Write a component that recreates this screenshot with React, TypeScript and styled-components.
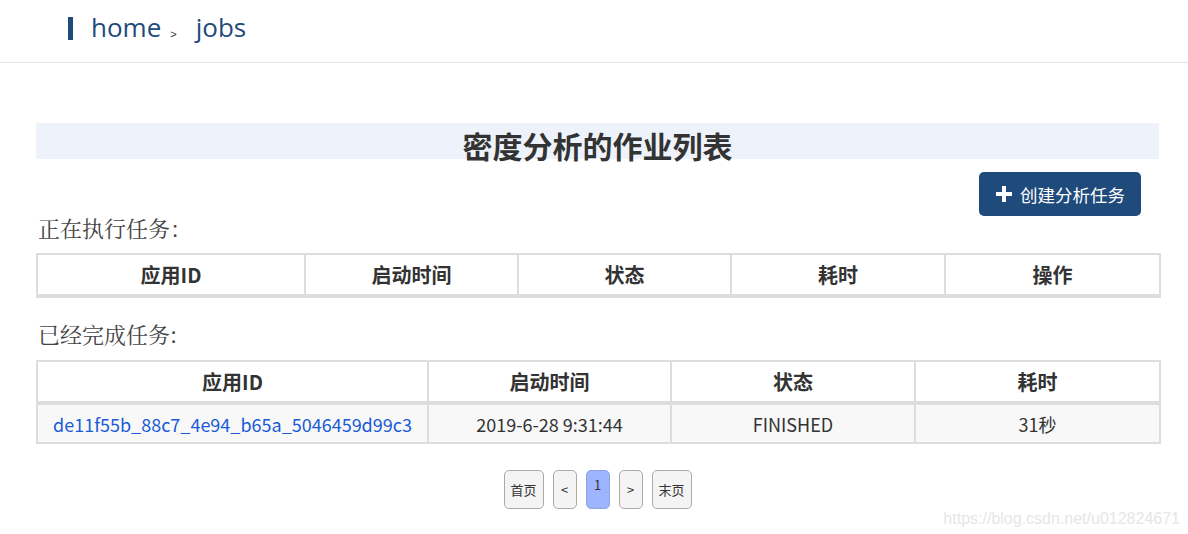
import styled, { createGlobalStyle } from "styled-components";

const GlobalStyle = createGlobalStyle`
    html, body {
        margin: 0;
        padding: 0;
        background: #fff;
    }
    body {
        font-family: "Noto Sans CJK SC", "Noto Sans", sans-serif;
        color: #333;
    }
    * {
        box-sizing: border-box;
    }
`;

const Page = styled.div`
    position: relative;
    width: 1188px;
    height: 534px;
    overflow: hidden;
`;

const Header = styled.header`
    height: 63px;
    border-bottom: 1px solid #e5e5e5;
    display: flex;
    align-items: center;
    padding-left: 68px;
`;

const Bar = styled.span`
    display: block;
    width: 5px;
    height: 23px;
    background: #1f4a7c;
    margin-right: 18px;
    margin-top: -6px;
`;

const Crumb = styled.a`
    font-family: "Open Sans", "Noto Sans", sans-serif;
    font-size: 26px;
    color: #1f4a7c;
    text-decoration: none;
    margin-top: -8px;
`;

const Sep = styled.span`
    font-family: "Liberation Sans", sans-serif;
    font-size: 11px;
    color: #333;
    margin: 6px 19px 0 9px;
`;

const Main = styled.main`
    padding: 60px 29px 0 36px;
`;

const TitleBand = styled.div`
    height: 36px;
    background: #eef3fb;
    text-align: center;
`;

const Title = styled.h1`
    margin: 0;
    font-size: 30px;
    font-weight: 700;
    line-height: 44px;
    color: #333;
`;

const Toolbar = styled.div`
    display: flex;
    justify-content: flex-end;
    padding-right: 18px;
    margin-top: 13px;
`;

const CreateBtn = styled.button`
    display: flex;
    align-items: center;
    gap: 8px;
    height: 44px;
    padding: 0 16px 0 17px;
    background: #1f4a7c;
    border: none;
    border-radius: 5px;
    color: #fff;
    font-family: "Noto Sans CJK SC", sans-serif;
    font-size: 17.5px;
    cursor: pointer;
`;

const SectionLabel = styled.div<{ gap: number }>`
    margin-top: ${(p) => p.gap}px;
    padding-left: 2px;
    font-family: "Noto Serif CJK SC", "Liberation Serif", "Noto Sans CJK SC", serif;
    font-size: 22px;
    line-height: 24px;
    color: #444;
`;

const Table = styled.table<{ top: number }>`
    width: 100%;
    margin-top: ${(p) => p.top}px;
    border-collapse: collapse;
    table-layout: fixed;
    border: 2px solid #ddd;
`;

const Th = styled.th`
    height: 42px;
    border: 2px solid #ddd;
    border-bottom-width: 4px;
    font-size: 20px;
    font-weight: 700;
    color: #333;
    text-align: center;
    padding: 0;
`;

const Td = styled.td`
    height: 40px;
    border: 2px solid #ddd;
    background: #f8f8f8;
    font-size: 18px;
    color: #333;
    text-align: center;
    padding: 0;
`;

const IdLink = styled.a`
    color: #1a5bd6;
    text-decoration: none;
`;

const Pager = styled.div`
    display: flex;
    justify-content: center;
    gap: 9px;
    margin-top: 26px;
`;

const PageBtn = styled.button<{ active?: boolean; wide?: boolean }>`
    height: 39px;
    min-width: ${(p) => (p.wide ? 40 : 24)}px;
    padding: ${(p) => (p.active ? "4px 0 0" : "0 4px")};
    display: flex;
    justify-content: center;
    align-items: ${(p) => (p.active ? "flex-start" : "center")};
    background: ${(p) => (p.active ? "#9db4ff" : "#f4f4f4")};
    border: 1px solid ${(p) => (p.active ? "#8fa3e0" : "#aaa")};
    border-radius: 5px;
    font-family: "Noto Sans CJK SC", sans-serif;
    font-size: 13px;
    color: #333;
    cursor: pointer;
`;

const Watermark = styled.div`
    position: absolute;
    right: 8px;
    bottom: 6px;
    font-family: "Liberation Sans", Arial, sans-serif;
    font-size: 16px;
    color: #e6e6e6;
`;

const Plus = () => (
    <svg width="16" height="16" viewBox="0 0 16 16">
        <path d="M6 0h4v6h6v4h-6v6H6v-6H0V6h6z" fill="#fff" />
    </svg>
);

const running = ["应用ID", "启动时间", "状态", "耗时", "操作"];
const runningWidths = [268, 213, 213, 214, 215];

const done = ["应用ID", "启动时间", "状态", "耗时"];
const doneWidths = [391, 243, 244, 245];

export default function App() {
    return (
        <Page>
            <GlobalStyle />
            <Header>
                <Bar />
                <Crumb href="#">home</Crumb>
                <Sep>&gt;</Sep>
                <Crumb href="#">jobs</Crumb>
            </Header>
            <Main>
                <TitleBand>
                    <Title>密度分析的作业列表</Title>
                </TitleBand>
                <Toolbar>
                    <CreateBtn>
                        <Plus />
                        创建分析任务
                    </CreateBtn>
                </Toolbar>
                <SectionLabel gap={0}>正在执行任务：</SectionLabel>
                <Table top={13}>
                    <colgroup>
                        {runningWidths.map((w, i) => (
                            <col key={i} style={{ width: w }} />
                        ))}
                    </colgroup>
                    <thead>
                        <tr>
                            {running.map((h) => (
                                <Th key={h}>{h}</Th>
                            ))}
                        </tr>
                    </thead>
                </Table>
                <SectionLabel gap={24}>已经完成任务:</SectionLabel>
                <Table top={14}>
                    <colgroup>
                        {doneWidths.map((w, i) => (
                            <col key={i} style={{ width: w }} />
                        ))}
                    </colgroup>
                    <thead>
                        <tr>
                            {done.map((h) => (
                                <Th key={h}>{h}</Th>
                            ))}
                        </tr>
                    </thead>
                    <tbody>
                        <tr>
                            <Td>
                                <IdLink href="#">de11f55b_88c7_4e94_b65a_5046459d99c3</IdLink>
                            </Td>
                            <Td>2019-6-28 9:31:44</Td>
                            <Td>FINISHED</Td>
                            <Td>31秒</Td>
                        </tr>
                    </tbody>
                </Table>
                <Pager>
                    <PageBtn wide>首页</PageBtn>
                    <PageBtn>&lt;</PageBtn>
                    <PageBtn active>1</PageBtn>
                    <PageBtn>&gt;</PageBtn>
                    <PageBtn wide>末页</PageBtn>
                </Pager>
            </Main>
            <Watermark>https://blog.csdn.net/u012824671</Watermark>
        </Page>
    );
}
